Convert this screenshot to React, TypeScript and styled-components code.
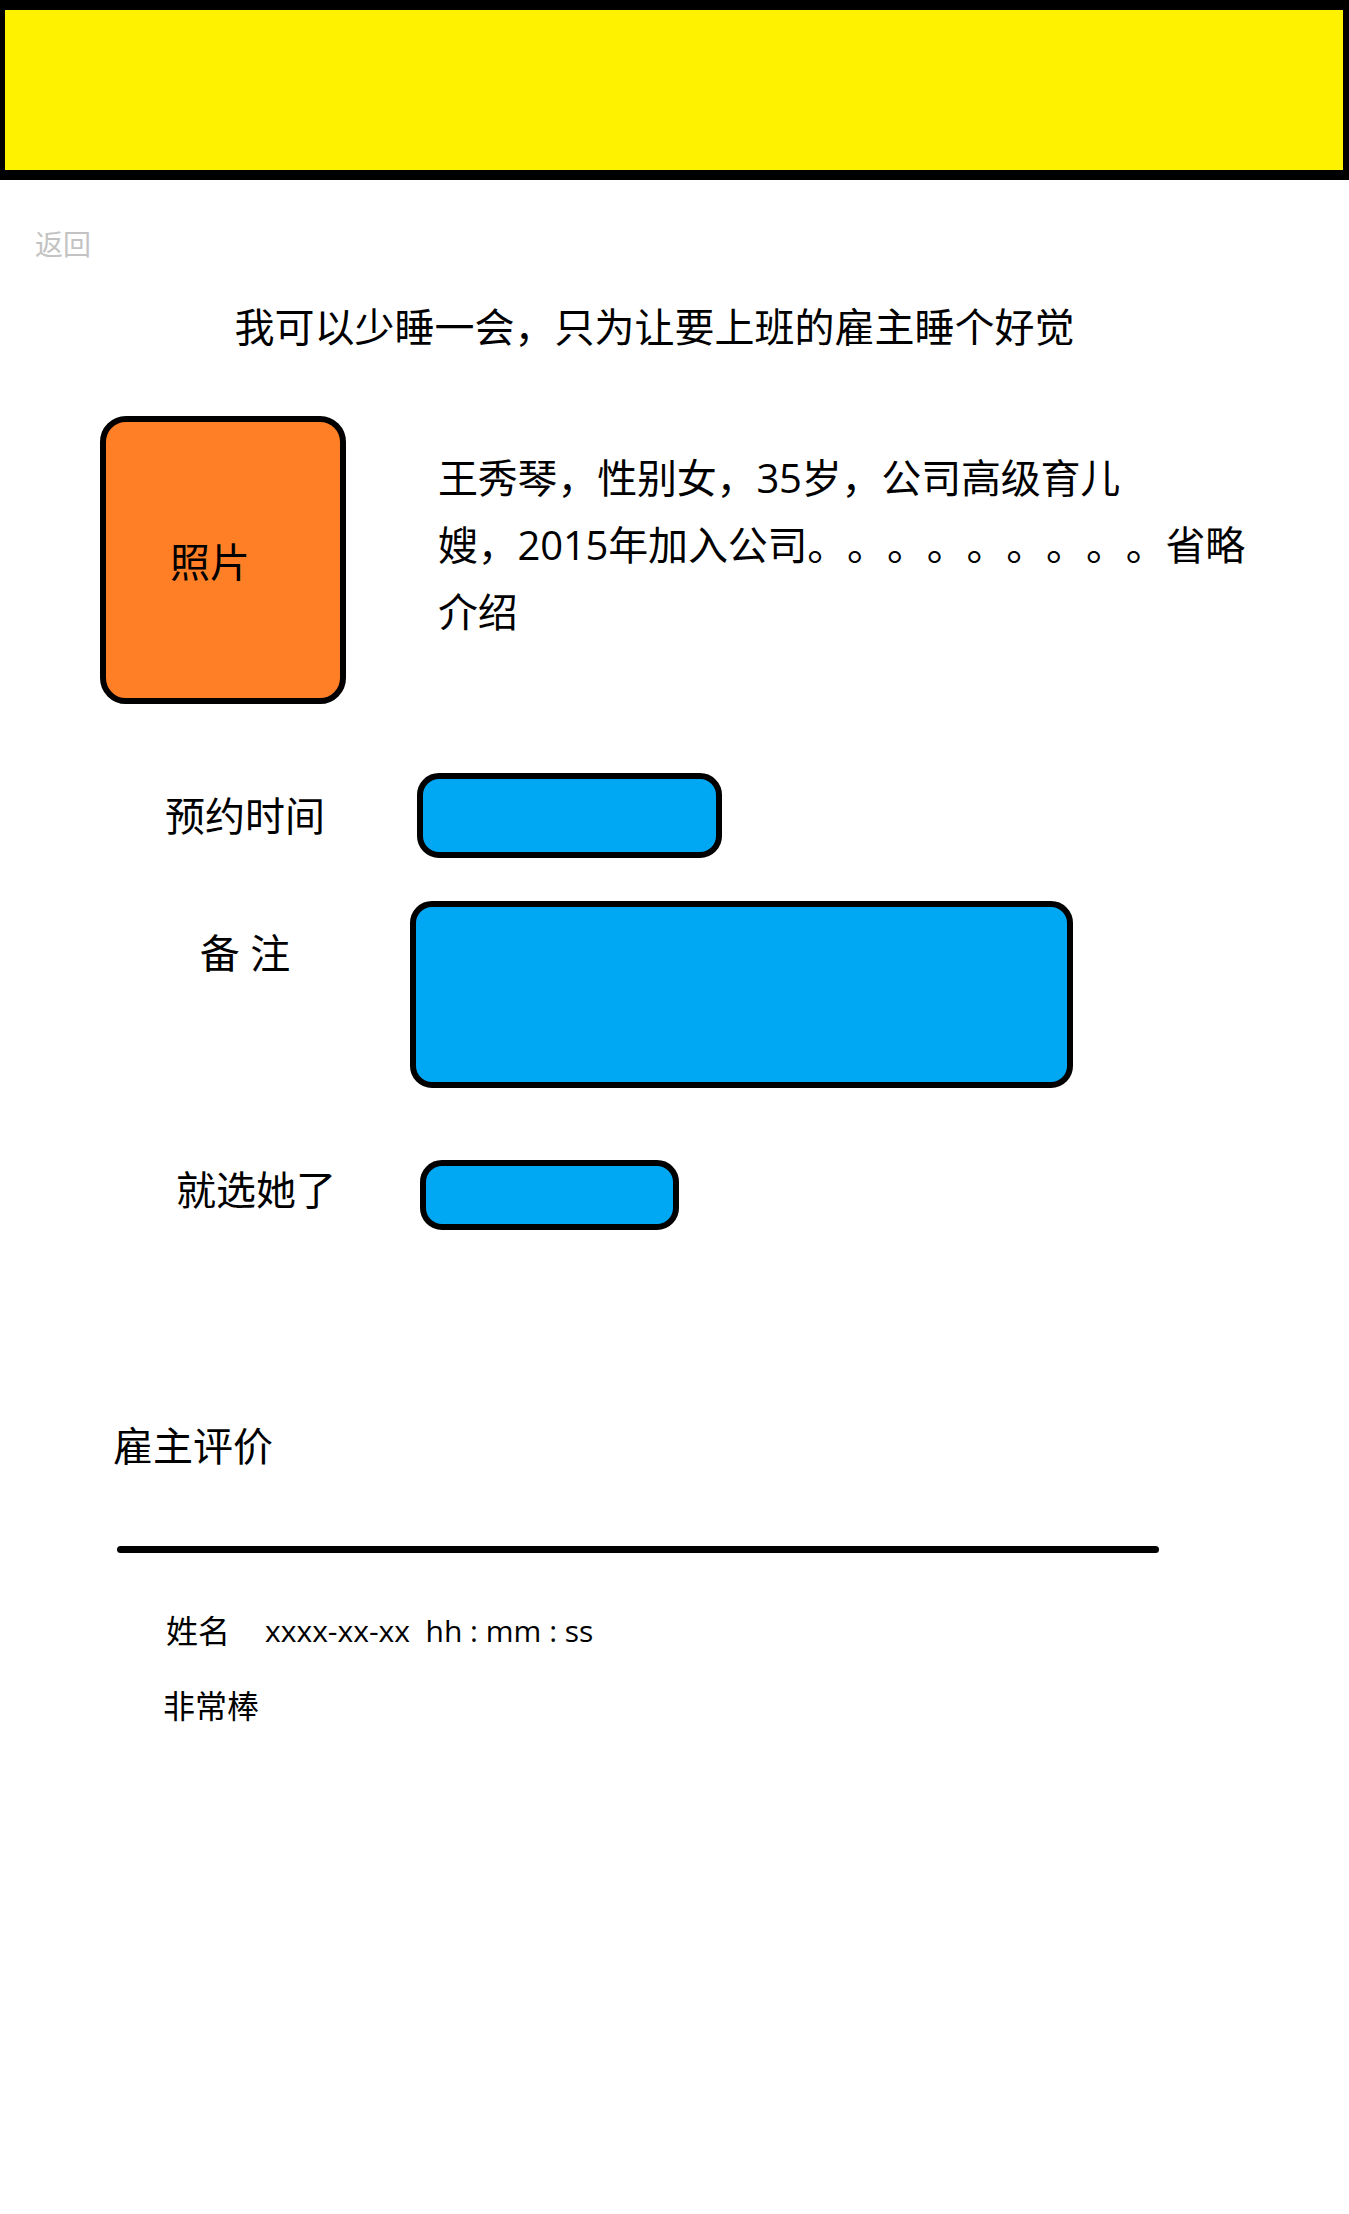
import styled, { createGlobalStyle } from 'styled-components';

const GlobalStyle = createGlobalStyle`
  html, body {
    margin: 0;
    padding: 0;
    background: #ffffff;
  }
  body {
    font-family: 'Open Sans', 'Noto Sans CJK SC', sans-serif;
    color: #000000;
    text-spacing-trim: space-all;
  }
`;

const Page = styled.div`
  width: 1349px;
  min-height: 2214px;
  display: flex;
  flex-direction: column;
`;

const Banner = styled.header`
  box-sizing: border-box;
  width: 100%;
  height: 180px;
  background: #fff200;
  border-style: solid;
  border-color: #000000;
  border-width: 10px 6px 10px 5px;
`;

const BackLink = styled.a`
  display: block;
  margin: 44px 0 0 35px;
  font-size: 28px;
  line-height: 40px;
  color: #c3c3c3;
  cursor: pointer;
`;

const Slogan = styled.h1`
  margin: 33px 40px 0 0;
  font-size: 40px;
  line-height: 60px;
  font-weight: 400;
  text-align: center;
`;

const Profile = styled.section`
  display: flex;
  align-items: flex-start;
  gap: 92px;
  margin: 59px 0 0 100px;
`;

const Photo = styled.div`
  box-sizing: border-box;
  width: 246px;
  height: 288px;
  flex: none;
  display: flex;
  align-items: center;
  padding-left: 64px;
  background: #ff7f27;
  border: 6px solid #000000;
  border-radius: 26px;
  font-size: 40px;
`;

const Intro = styled.p`
  margin: 0;
  padding-top: 28px;
  font-size: 40px;
  line-height: 67px;
  letter-spacing: -0.2px;
`;

const Form = styled.div`
  display: flex;
  flex-direction: column;
  margin: 69px 0 0 100px;
`;

const FieldRow = styled.div<{ $align: 'center' | 'flex-start'; $gap: number }>`
  display: grid;
  grid-template-columns: 290px auto;
  align-items: ${(p) => p.$align};
  margin-top: ${(p) => p.$gap}px;
`;

const FieldLabel = styled.label<{ $top?: number; $left?: number }>`
  padding-top: ${(p) => p.$top ?? 0}px;
  padding-left: ${(p) => p.$left ?? 0}px;
  text-align: center;
  font-size: 40px;
  line-height: 56px;
  white-space: pre;
`;

const FieldBox = styled.div<{ $w: number; $h: number; $shift: number }>`
  box-sizing: border-box;
  width: ${(p) => p.$w}px;
  height: ${(p) => p.$h}px;
  margin-left: ${(p) => p.$shift}px;
  background: #00a8f3;
  border: 6px solid #000000;
  border-radius: 22px;
`;

const Reviews = styled.section`
  margin: 188px 0 0 113px;
`;

const ReviewsTitle = styled.h2`
  margin: 0;
  font-size: 40px;
  line-height: 56px;
  font-weight: 400;
`;

const Divider = styled.div`
  width: 1042px;
  height: 7px;
  margin: 72px 0 0 4px;
  background: #000000;
  border-radius: 4px;
`;

const ReviewItem = styled.div`
  margin: 56px 0 0 53px;
  display: flex;
  flex-direction: column;
  gap: 31px;
`;

const ReviewMeta = styled.div`
  display: flex;
  gap: 35px;
  font-size: 32px;
  line-height: 44px;
`;

const ReviewDate = styled.span`
  font-size: 30px;
  white-space: pre;
`;

const ReviewText = styled.div`
  margin-left: -3px;
  font-size: 32px;
  line-height: 44px;
`;

export default function App() {
  return (
    <Page>
      <GlobalStyle />
      <Banner />
      <BackLink>返回</BackLink>
      <Slogan>我可以少睡一会，只为让要上班的雇主睡个好觉</Slogan>
      <Profile>
        <Photo>照片</Photo>
        <Intro>
          王秀琴，性别女，35岁，公司高级育儿
          <br />
          嫂，2015年加入公司。。。。。。。。。省略
          <br />
          介绍
        </Intro>
      </Profile>
      <Form>
        <FieldRow $align="center" $gap={0}>
          <FieldLabel>预约时间</FieldLabel>
          <FieldBox $w={305} $h={85} $shift={27} />
        </FieldRow>
        <FieldRow $align="flex-start" $gap={43}>
          <FieldLabel $top={24} $left={-8}>{'备 注'}</FieldLabel>
          <FieldBox $w={663} $h={187} $shift={20} />
        </FieldRow>
        <FieldRow $align="flex-start" $gap={72}>
          <FieldLabel $top={2} $left={22}>
            就选她了
          </FieldLabel>
          <FieldBox $w={259} $h={70} $shift={30} />
        </FieldRow>
      </Form>
      <Reviews>
        <ReviewsTitle>雇主评价</ReviewsTitle>
        <Divider />
        <ReviewItem>
          <ReviewMeta>
            <span>姓名</span>
            <ReviewDate>xxxx-xx-xx  hh : mm : ss</ReviewDate>
          </ReviewMeta>
          <ReviewText>非常棒</ReviewText>
        </ReviewItem>
      </Reviews>
    </Page>
  );
}
